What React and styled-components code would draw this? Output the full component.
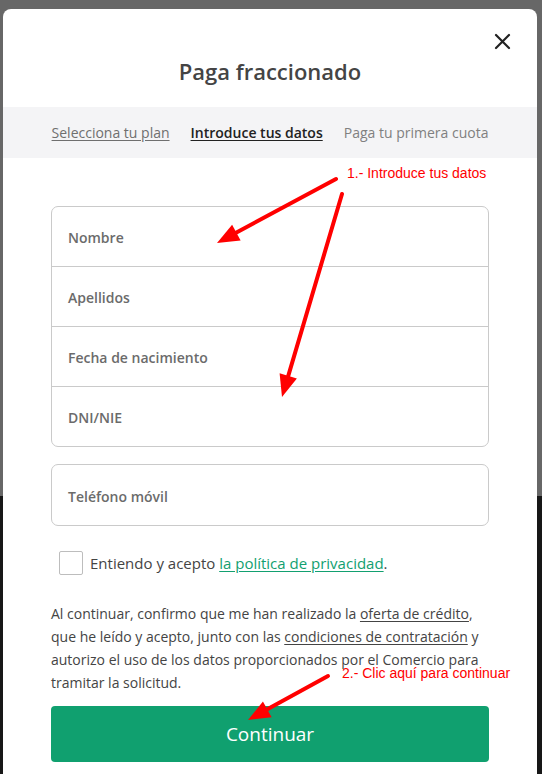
import React from 'react';
import styled, { createGlobalStyle } from 'styled-components';

const GlobalStyle = createGlobalStyle`
  html, body {
    margin: 0;
    padding: 0;
    overflow: hidden;
  }
  body {
    font-family: 'Open Sans', 'Noto Sans', sans-serif;
    background: linear-gradient(to bottom, #676767 0, #676767 496px, #171717 496px);
    min-height: 774px;
  }
`;

const Page = styled.div`
  position: relative;
  width: 542px;
  height: 774px;
  overflow: hidden;
`;

const Modal = styled.div`
  margin: 9px 0 0 3px;
  width: 534px;
  background: #fff;
  border-radius: 8px 8px 0 0;
  padding-bottom: 40px;
`;

const Header = styled.header`
  position: relative;
  padding: 46px 0 20px;
  text-align: center;
`;

const Title = styled.h2`
  margin: 0;
  font-size: 22px;
  line-height: 32px;
  font-weight: 600;
  color: #444;
`;

const CloseButton = styled.button`
  position: absolute;
  top: 24px;
  right: 26px;
  width: 17px;
  height: 17px;
  padding: 0;
  border: 0;
  background: none;
  cursor: pointer;
  svg {
    display: block;
  }
`;

const Steps = styled.nav`
  display: flex;
  justify-content: center;
  align-items: center;
  gap: 21px;
  height: 51px;
  background: #f4f4f6;
`;

const Step = styled.span`
  font-size: 14px;
  color: ${(p) => (p.$active ? '#222' : p.$done ? '#6f6f6f' : '#808080')};
  font-weight: ${(p) => (p.$active ? 600 : 400)};
  text-decoration: ${(p) => (p.$done || p.$active ? 'underline' : 'none')};
  text-underline-offset: 2px;
`;

const Content = styled.div`
  padding: 48px 48px 0;
`;

const FieldGroup = styled.div`
  border: 1px solid #cacaca;
  border-radius: 7px;
  margin-bottom: ${(p) => p.$gap || 0}px;
`;

const Field = styled.div`
  display: flex;
  align-items: center;
  box-sizing: border-box;
  height: ${(p) => p.$h || 59}px;
  padding: 2px 0 0 16px;
  font-size: 14px;
  font-weight: 600;
  color: #6b6b6b;
  & + & {
    border-top: 1px solid #cacaca;
    height: 60px;
  }
`;

const CheckRow = styled.label`
  display: flex;
  align-items: center;
  gap: 7px;
  margin: 25px 0 0 8px;
  font-size: 15px;
  color: #444;
`;

const Box = styled.span`
  width: 22px;
  height: 22px;
  border: 1px solid #bdbdbd;
  border-radius: 2px;
  flex: none;
`;

const GreenLink = styled.a`
  color: #12a070;
  text-decoration: underline;
  text-underline-offset: 2px;
`;

const Legal = styled.p`
  margin: 27px 0 0;
  font-size: 14px;
  line-height: 23px;
  color: #444;
  a {
    color: #444;
    text-decoration: underline;
    text-underline-offset: 2px;
  }
`;

const Continue = styled.button`
  display: block;
  width: 100%;
  height: 56px;
  margin-top: 12px;
  border: 0;
  border-radius: 4px;
  background: #10a06f;
  color: #fff;
  font-family: inherit;
  font-size: 19px;
  font-weight: 500;
  cursor: pointer;
`;

const Overlay = styled.svg`
  position: absolute;
  left: 0;
  top: 0;
  pointer-events: none;
`;

const NoteText = styled.text`
  font-family: 'Liberation Sans', Arial, sans-serif;
  font-size: 14px;
  fill: #ff0000;
`;

function Arrow({ from, to }) {
  const [x1, y1] = from;
  const [x2, y2] = to;
  const len = Math.hypot(x2 - x1, y2 - y1);
  const ux = (x2 - x1) / len;
  const uy = (y2 - y1) / len;
  const head = 22;
  const half = 9;
  const bx = x2 - ux * head;
  const by = y2 - uy * head;
  const px = -uy * half;
  const py = ux * half;
  const pts = `${x2},${y2} ${bx + px},${by + py} ${bx - px},${by - py}`;
  return (
    <g>
      <line x1={x1} y1={y1} x2={bx + ux * 2} y2={by + uy * 2} stroke="#ff0000" strokeWidth="4" strokeLinecap="round" />
      <polygon points={pts} fill="#ff0000" />
    </g>
  );
}

export default function App() {
  return (
    <Page>
      <GlobalStyle />
      <Modal>
        <Header>
          <Title>Paga fraccionado</Title>
          <CloseButton aria-label="Cerrar">
            <svg width="17" height="17" viewBox="0 0 17 17">
              <path d="M2 2L15 15M15 2L2 15" stroke="#222" strokeWidth="2.2" strokeLinecap="round" />
            </svg>
          </CloseButton>
        </Header>
        <Steps>
          <Step $done>Selecciona tu plan</Step>
          <Step $active>Introduce tus datos</Step>
          <Step>Paga tu primera cuota</Step>
        </Steps>
        <Content>
          <FieldGroup $gap={17}>
            <Field>Nombre</Field>
            <Field>Apellidos</Field>
            <Field>Fecha de nacimiento</Field>
            <Field>DNI/NIE</Field>
          </FieldGroup>
          <FieldGroup>
            <Field $h={60}>Teléfono móvil</Field>
          </FieldGroup>
          <CheckRow>
            <Box />
            <span>
              Entiendo y acepto <GreenLink href="#">la política de privacidad</GreenLink>.
            </span>
          </CheckRow>
          <Legal>
            Al continuar, confirmo que me han realizado la <a href="#">oferta de crédito</a>,
            que he leído y acepto, junto con las <a href="#">condiciones de contratación</a> y
            autorizo el uso de los datos proporcionados por el Comercio para tramitar la solicitud.
          </Legal>
          <Continue>Continuar</Continue>
        </Content>
      </Modal>
      <Overlay width="542" height="774" viewBox="0 0 542 774">
        <NoteText x="347" y="178">1.- Introduce tus datos</NoteText>
        <Arrow from={[336, 179]} to={[217, 243]} />
        <Arrow from={[342, 194]} to={[282, 397]} />
        <NoteText x="342" y="678">2.- Clic aquí para continuar</NoteText>
        <Arrow from={[328, 676]} to={[248, 720]} />
      </Overlay>
    </Page>
  );
}
